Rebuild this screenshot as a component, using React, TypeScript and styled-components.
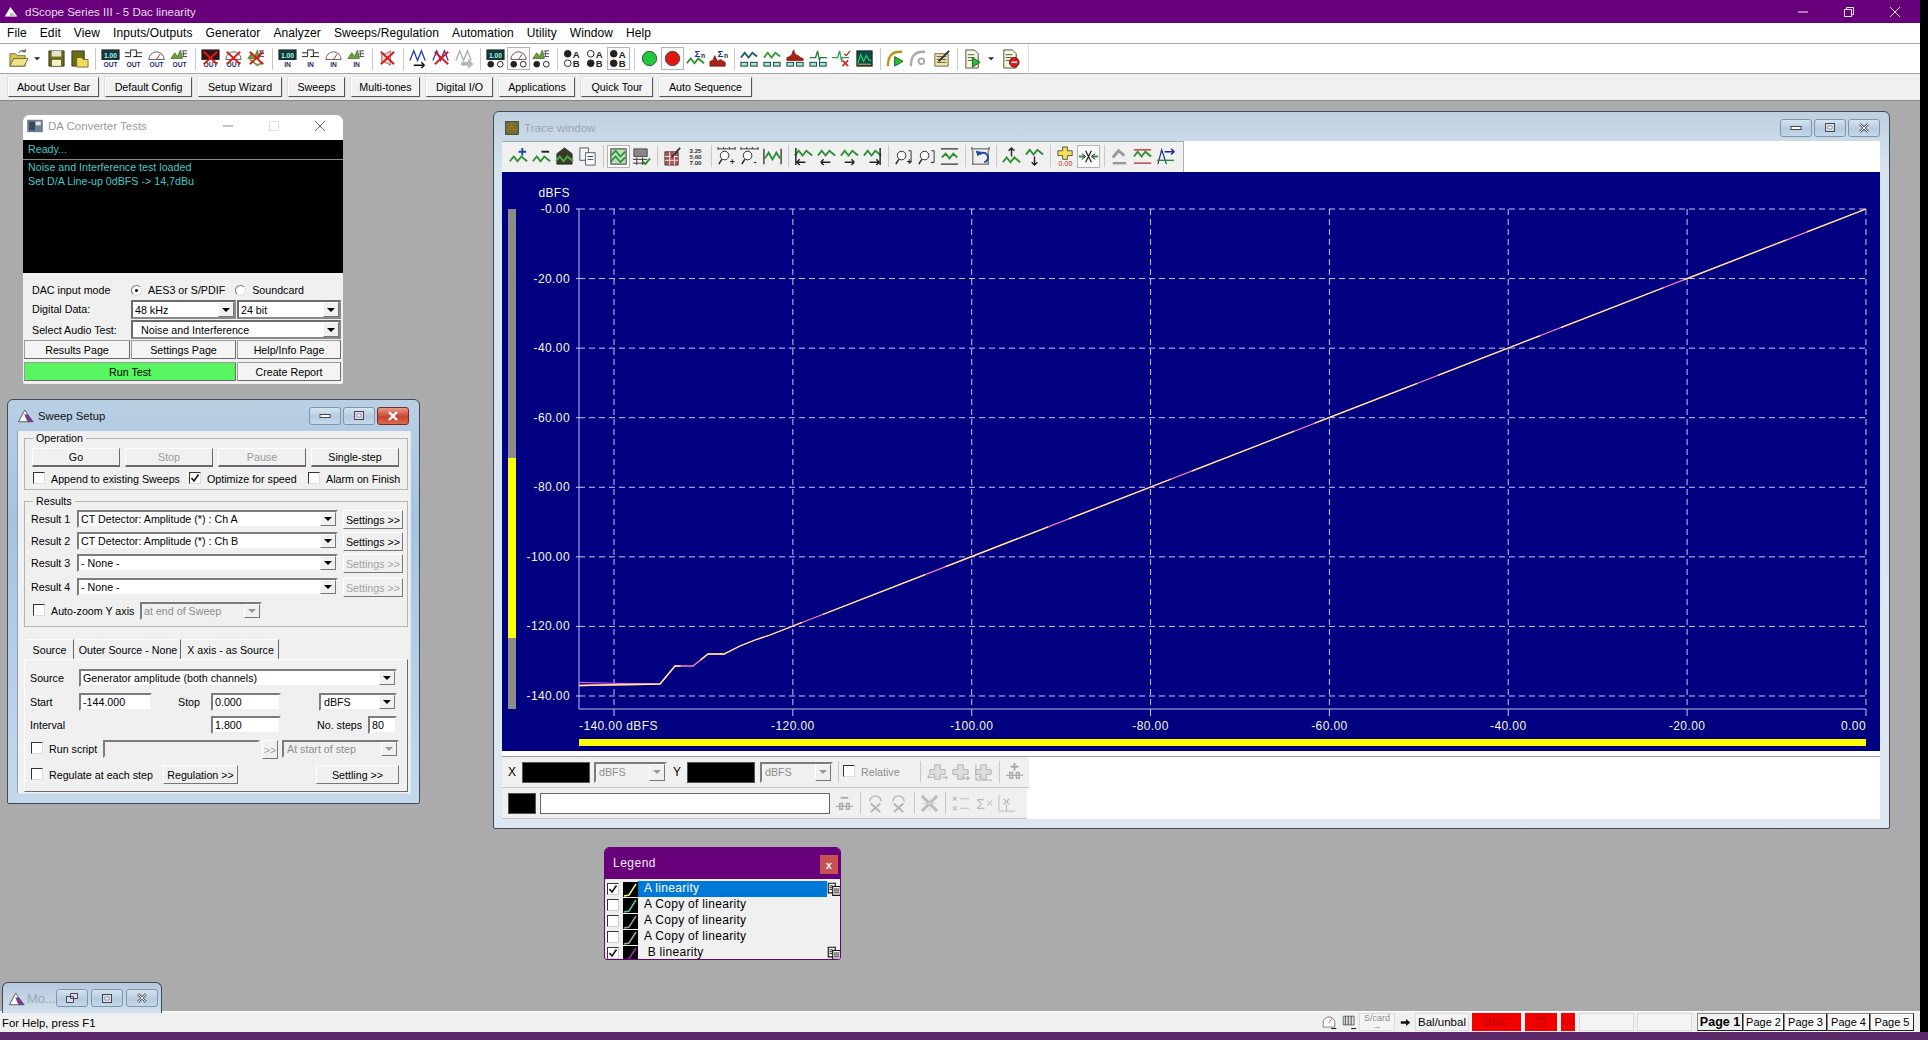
import React from "react";
import styled, { createGlobalStyle, css } from "styled-components";

const GlobalStyle = createGlobalStyle`
  html, body {
    margin: 0;
    padding: 0;
    background: #000;
    overflow: hidden;
  }
  * {
    box-sizing: border-box;
  }
  body {
    font-family: "Liberation Sans", Arial, sans-serif;
    font-size: 10.7px;
    color: #000;
  }
`;

const Screen = styled.div`
  width: 1928px;
  height: 1040px;
  display: flex;
  flex-direction: column;
  background: #000;
`;

const Frame = styled.div`
  width: 1920px;
  height: 1032px;
  display: flex;
  flex-direction: column;
  background: #f0f0f0;
`;

const BottomStrip = styled.div`
  height: 8px;
  background: #5c2a68;
`;

const TitleBar = styled.div`
  height: 23px;
  background: #68007c;
  color: #e8dcec;
  display: flex;
  align-items: center;
  padding-left: 4px;
  font-size: 11.5px;
  flex: none;
`;

const TitleText = styled.span`
  margin-left: 7px;
  flex: 1;
`;

const SysBtn = styled.div`
  width: 46px;
  height: 23px;
  display: flex;
  align-items: center;
  justify-content: center;
  &:last-child {
    margin-right: 2px;
  }
`;

const MenuBar = styled.div`
  height: 21px;
  background: #fff;
  border-bottom: 1px solid #a6a6a6;
  display: flex;
  align-items: center;
  padding-left: 7px;
  gap: 13px;
  font-size: 12px;
  letter-spacing: 0.1px;
  flex: none;
`;

const MainToolbar = styled.div`
  height: 30px;
  background: #fff;
  border-bottom: 1px solid #a6a6a6;
  display: flex;
  align-items: center;
  padding-left: 7px;
  flex: none;
`;

const ToolGroupEnd = styled.div`
  width: 1px;
  height: 29px;
  background: #ddd;
  margin-left: 6px;
`;

const ToolBtn = styled.div<{ $w: number; $pressed?: boolean; $off?: boolean }>`
  width: ${(p) => p.$w}px;
  height: 23px;
  flex: none;
  display: flex;
  align-items: center;
  justify-content: center;
  ${(p) =>
    p.$pressed &&
    css`
      background: #fafafa;
      border: 1px solid #b4b4b4;
    `}
  ${(p) =>
    p.$off &&
    css`
      filter: grayscale(1) opacity(0.5);
    `}
`;

const ToolSep = styled.div<{ $w: number }>`
  width: ${(p) => p.$w}px;
  height: 22px;
  flex: none;
  display: flex;
  justify-content: center;
  &::before {
    content: "";
    width: 1px;
    background: #c8c8c8;
  }
`;

const UserBar = styled.div`
  height: 26px;
  background: #f0f0f0;
  display: flex;
  align-items: flex-start;
  padding: 3px 0 0 8px;
  gap: 6px;
  flex: none;
`;

const UserBtn = styled.div<{ $w: number }>`
  width: ${(p) => p.$w}px;
  height: 20px;
  background: #f2f2f2;
  border: 1px solid;
  border-color: #fff #555 #555 #fff;
  box-shadow: 0 0 0 0.5px #cfcfcf;
  display: flex;
  align-items: center;
  justify-content: center;
`;

const Desktop = styled.div`
  flex: 1;
  position: relative;
  background: #ababab;
  border-top: 1px solid #888;
`;

const DaWindow = styled.div`
  position: absolute;
  left: 23px;
  top: 14px;
  width: 320px;
  height: 269px;
  border-radius: 7px 7px 2px 2px;
  overflow: hidden;
  background: #f0f0f0;
  display: flex;
  flex-direction: column;
`;

const DaTitle = styled.div`
  height: 25px;
  background: #fff;
  display: flex;
  align-items: center;
  padding: 0 0 3px 4px;
  color: #9a9a9a;
  font-size: 11.5px;
  flex: none;
`;

const DaTitleText = styled.span`
  margin-left: 5px;
  flex: 1;
`;

const DaCap = styled.div`
  width: 46px;
  display: flex;
  justify-content: center;
`;

const Console = styled.div`
  height: 133px;
  background: #000;
  color: #45c8c8;
  flex: none;
`;

const ConsoleHead = styled.div`
  height: 20px;
  padding: 3px 0 0 5px;
  border-bottom: 1px solid #8a8a8a;
`;

const ConsoleBody = styled.div`
  padding-left: 5px;
  line-height: 14px;
`;

const DaForm = styled.div`
  padding: 8px 2px 0 1px;
  display: grid;
  grid-template-columns: 106px 105px 104px;
  column-gap: 1px;
  grid-template-rows: 18px 20px 21px 22px 18px;
`;

const DaLabel = styled.div`
  padding-left: 8px;
  display: flex;
  align-items: center;
`;

const RadioRow = styled.div`
  grid-column: 2 / 4;
  display: flex;
  align-items: center;
`;

const Radio = styled.span<{ $on?: boolean; $ml?: number }>`
  width: 11px;
  height: 11px;
  border-radius: 50%;
  border: 1px solid #777;
  border-right-color: #ddd;
  border-bottom-color: #ddd;
  background: #fff;
  margin-left: ${(p) => p.$ml ?? 0}px;
  margin-right: 6px;
  display: flex;
  align-items: center;
  justify-content: center;
  &::after {
    content: "";
    width: 3px;
    height: 3px;
    border-radius: 50%;
    background: ${(p) => (p.$on ? "#000" : "transparent")};
  }
`;

const Sunken = styled.div<{ $w?: number; $off?: boolean; $pl?: number; $ml?: number }>`
  ${(p) => p.$w !== undefined && `width: ${p.$w}px;`}
  height: 18px;
  flex: none;
  margin-left: ${(p) => p.$ml ?? 0}px;
  background: ${(p) => (p.$off ? "#f0f0f0" : "#fff")};
  color: ${(p) => (p.$off ? "#8e8e8e" : "#000")};
  border: 2px solid;
  border-color: #7c7c7c #efefef #efefef #7c7c7c;
  display: flex;
  align-items: center;
  padding-left: ${(p) => p.$pl ?? 2}px;
  position: relative;
  white-space: nowrap;
  overflow: hidden;
`;

const ComboArrow = styled.div<{ $off?: boolean }>`
  position: absolute;
  right: 0;
  top: 0;
  bottom: 0;
  width: 16px;
  background: #f0f0f0;
  border: 1px solid;
  border-color: #fff #777 #777 #fff;
  display: flex;
  align-items: center;
  justify-content: center;
  &::after {
    content: "";
    border-left: 4px solid transparent;
    border-right: 4px solid transparent;
    border-top: 4px solid ${(p) => (p.$off ? "#999" : "#000")};
  }
`;

const DaCombo = styled(Sunken)`
  height: 19px;
  border-color: #6a6a6a #8a8a8a #8a8a8a #6a6a6a;
  align-self: start;
  margin-top: 1px;
`;

const DaComboWide = styled(DaCombo)`
  grid-column: 2 / 4;
  padding-left: 8px;
`;

const DaBtn = styled.div<{ $green?: boolean }>`
  height: 19px;
  align-self: start;
  background: ${(p) => (p.$green ? "#57f55f" : "#f4f4f4")};
  border: 1px solid #6c6c6c;
  border-top-color: #9a9a9a;
  border-left-color: #9a9a9a;
  display: flex;
  align-items: center;
  justify-content: center;
`;

const RunBtn = styled(DaBtn)`
  grid-column: 1 / 3;
`;

const AeroWindow = styled.div`
  position: absolute;
  background: linear-gradient(#b9cfe4, #a5c3e1 30%, #c4d9ec);
  border: 1px solid #3f4a55;
  border-radius: 6px 6px 2px 2px;
`;

const SweepWindow = styled(AeroWindow)`
  left: 7px;
  top: 298px;
  width: 413px;
  height: 405px;
  display: flex;
  flex-direction: column;
`;

const AeroTitle = styled.div`
  height: 31px;
  display: flex;
  align-items: center;
  padding: 0 10px 0 9px;
  font-size: 11.3px;
  flex: none;
`;

const AeroTitleText = styled.span<{ $dim?: boolean }>`
  margin-left: 4px;
  flex: 1;
  color: ${(p) => (p.$dim ? "#98a6b4" : "#111")};
`;

const CapRow = styled.div<{ $gap?: number }>`
  display: flex;
  gap: ${(p) => p.$gap ?? 2}px;
`;

const CapBtn = styled.div<{ $red?: boolean }>`
  width: 32px;
  height: 18px;
  border: 1px solid ${(p) => (p.$red ? "#7a2a20" : "#7f95ab")};
  border-radius: 3px;
  background: ${(p) =>
    p.$red
      ? "linear-gradient(#e89a8a, #c8442e 55%, #d86a50)"
      : "linear-gradient(#d7e4f0, #b5cbe0 55%, #c6d9ea)"};
  display: flex;
  align-items: center;
  justify-content: center;
`;

const SweepClient = styled.div`
  flex: 1;
  margin: 0 8px 9px 9px;
  background: #f0f0f0;
  padding: 1px 5px 0 6px;
  border: 1px solid #8ba0b5;
  border-top: 0;
  border-right-color: #dfe8f1;
  border-bottom-color: #dfe8f1;
`;

const Group = styled.fieldset`
  margin: 0 0 5px 0;
  border: 1px solid #b4b4b4;
  padding: 3px 7px 0 7px;
  min-width: 0;
  width: 384px;
`;

const ResultsGroup = styled(Group)`
  padding-top: 2px;
`;

const GroupTitle = styled.legend`
  margin-left: 1px;
  padding: 0 3px;
  line-height: 13px;
`;

const OpButtons = styled.div`
  display: grid;
  grid-template-columns: repeat(4, 88px);
  column-gap: 5px;
`;

const OpBtn = styled.div<{ $off?: boolean }>`
  height: 19px;
  background: #f0f0f0;
  color: ${(p) => (p.$off ? "#9a9a9a" : "#000")};
  border: 1px solid;
  border-color: #fff #6a6a6a #6a6a6a #fff;
  border-bottom-width: 2px;
  display: flex;
  align-items: center;
  justify-content: center;
`;

const CheckRow = styled.div`
  height: 20px;
  display: flex;
  align-items: center;
  margin-top: 2px;
`;

const PanelCheck = styled.div<{ $h: number }>`
  height: ${(p) => p.$h}px;
  display: flex;
  align-items: center;
`;

const Box = styled.span<{ $flush?: boolean }>`
  width: 12px;
  height: 12px;
  flex: none;
  display: inline-flex;
  align-items: center;
  justify-content: center;
  background: #fff;
  border: 1px solid;
  border-color: #333 #ddd #ddd #333;
  margin: ${(p) => (p.$flush ? "0 6px 0 0" : "0 6px 0 1px")};
  position: relative;
  top: -1px;
`;

const CheckLabel = styled.span<{ $w?: number; $off?: boolean }>`
  ${(p) => p.$w !== undefined && `width: ${p.$w}px;`}
  color: ${(p) => (p.$off ? "#8e8e8e" : "#000")};
  white-space: nowrap;
  flex: none;
`;

const ResultGrid = styled.div`
  display: grid;
  grid-template-columns: 48px 261px 60px;
  grid-template-rows: 22px 22px 24px 24px 24px;
  margin-left: -3px;
`;

const ResultLabel = styled.div`
  height: 18px;
  display: flex;
  align-items: center;
  padding-left: 2px;
  white-space: nowrap;
`;

const SettingsBtn = styled.div<{ $off?: boolean }>`
  height: 19px;
  margin-left: 5px;
  width: 60px;
  color: ${(p) => (p.$off ? "#a4a4a4" : "#000")};
  border: 1px solid;
  border-color: #fff #777 #777 #fff;
  display: flex;
  align-items: center;
  justify-content: center;
  white-space: nowrap;
`;

const AutoRow = styled.div`
  grid-column: 1 / 4;
  display: flex;
  align-items: center;
  height: 18px;
  padding-left: 3px;
`;

const TabRow = styled.div`
  display: flex;
  margin: 12px 0 0 2px;
  height: 20px;
`;

const Tab = styled.div<{ $w: number }>`
  width: ${(p) => p.$w}px;
  display: flex;
  align-items: center;
  justify-content: center;
  margin-right: 2px;
  border-right: 1px solid #666;
  border-top: 1px solid #fff;
  white-space: nowrap;
`;

const TabPanel = styled.div`
  width: 384px;
  height: 133px;
  border: 1px solid;
  border-color: #fff #6a6a6a #6a6a6a #fff;
  padding: 9px 8px 0 5px;
  display: flex;
  flex-direction: column;
`;

const PanelRow = styled.div<{ $h: number }>`
  display: flex;
  align-items: flex-start;
  height: ${(p) => p.$h}px;
  flex: none;
`;

const PanelLabel = styled.div<{ $w?: number; $pl?: number }>`
  width: ${(p) => p.$w ?? 49}px;
  height: 18px;
  flex: none;
  padding-left: ${(p) => p.$pl ?? 0}px;
  display: flex;
  align-items: center;
`;

const SmallBtn = styled.div<{ $w: number; $off?: boolean; $ml?: number }>`
  width: ${(p) => p.$w}px;
  height: 19px;
  flex: none;
  margin-left: ${(p) => p.$ml ?? 0}px;
  color: ${(p) => (p.$off ? "#a4a4a4" : "#000")};
  border: 1px solid;
  border-color: #fff #777 #777 #fff;
  display: flex;
  align-items: center;
  justify-content: center;
  white-space: nowrap;
`;

const TraceWindow = styled(AeroWindow)`
  left: 493px;
  top: 10px;
  width: 1397px;
  height: 718px;
  background: linear-gradient(#bfd0df, #d6e4f0 8%, #dde8f2);
  display: flex;
  flex-direction: column;
`;

const TraceTitle = styled(AeroTitle)`
  height: 29px;
  padding: 2px 9px 0 10px;
  font-size: 11.7px;
`;

const TraceClient = styled.div`
  flex: 1;
  margin: 0 9px 9px 8px;
  background: #fff;
  display: flex;
  flex-direction: column;
`;

const TraceToolbar = styled.div`
  height: 31px;
  width: 682px;
  background: #f0f0f0;
  border-right: 1px solid #b0b0b0;
  border-top: 1px solid #9aa;
  display: flex;
  align-items: center;
  padding: 0 0 2px 5px;
  flex: none;
`;

const Plot = styled.svg`
  display: block;
  width: 1378px;
  height: 579px;
  background: #000080;
  flex: none;
`;

const ReadoutRow = styled.div<{ $w: number }>`
  width: ${(p) => p.$w}px;
  height: 31px;
  background: #f0f0f0;
  border-bottom: 1px solid #c4c4c4;
  display: flex;
  align-items: center;
  flex: none;
`;

const Spacer = styled.div`
  height: 6px;
  background: #fff;
  border-bottom: 1px solid #9a9a9a;
  flex: none;
`;

const BlackBox = styled.div<{ $w: number; $ml: number }>`
  width: ${(p) => p.$w}px;
  height: 21px;
  margin-left: ${(p) => p.$ml}px;
  background: #000;
  border: 1px solid #555;
  flex: none;
`;

const AxisName = styled.span<{ $w: number }>`
  width: ${(p) => p.$w}px;
  font-size: 12px;
  text-align: center;
  flex: none;
`;

const UnitCombo = styled(Sunken)`
  height: 21px;
`;

const WhiteField = styled.div`
  width: 290px;
  height: 21px;
  margin: 0 3px 0 4px;
  background: #fff;
  border: 1px solid #666;
  flex: none;
`;

const LegendWindow = styled.div`
  position: absolute;
  left: 604px;
  top: 746px;
  width: 237px;
  height: 113px;
  background: #f0f0f0;
  border: 1px solid #68007c;
  border-radius: 5px 5px 3px 3px;
  overflow: hidden;
`;

const LegendHead = styled.div`
  height: 31px;
  background: #68007c;
  color: #eee;
  display: flex;
  align-items: center;
  padding: 0 2px 2px 8px;
  font-size: 12px;
  letter-spacing: 0.5px;
  justify-content: space-between;
`;

const LegendClose = styled.div`
  width: 18px;
  height: 19px;
  background: #c75050;
  color: #fff;
  font-size: 11px;
  font-weight: bold;
  display: flex;
  align-items: center;
  justify-content: center;
  margin-top: 4px;
`;

const LegendList = styled.div`
  padding-top: 2px;
`;

const LegendRow = styled.div`
  height: 16px;
  display: flex;
  align-items: center;
  padding-left: 2px;
`;

const LegendBox = styled.span`
  width: 12px;
  height: 12px;
  background: #fff;
  border: 1px solid;
  border-color: #333 #ccc #ccc #333;
  display: flex;
  align-items: center;
  justify-content: center;
  margin-right: 4px;
  flex: none;
`;

const Swatch = styled.svg`
  width: 15px;
  height: 15px;
  display: block;
  background: #000;
  flex: none;
`;

const LegendName = styled.div<{ $active?: boolean }>`
  width: 189px;
  height: 16px;
  line-height: 15px;
  padding-left: 6px;
  font-size: 12px;
  letter-spacing: 0.3px;
  background: ${(p) => (p.$active ? "#0078d7" : "transparent")};
  color: ${(p) => (p.$active ? "#fff" : "#000")};
  flex: none;
  white-space: pre;
`;

const MiniWindow = styled(AeroWindow)`
  left: 2px;
  top: 881px;
  width: 160px;
  height: 31px;
  border-bottom: 0;
  border-radius: 6px 6px 0 0;
  background: linear-gradient(#b6c9dc, #d0e0ee);
  display: flex;
  align-items: center;
  padding-left: 5px;
  color: #9aa8b6;
  font-size: 13px;
`;

const MiniText = styled.span`
  width: 29px;
  margin-left: 2px;
  white-space: nowrap;
`;

const StatusBar = styled.div`
  height: 21px;
  background: #f0f0f0;
  border-top: 1px solid #fff;
  display: flex;
  align-items: center;
  justify-content: space-between;
  padding: 0 6px 0 2px;
  flex: none;
`;

const HelpText = styled.span`
  font-size: 11.3px;
  padding-top: 2px;
`;

const StatusRight = styled.div`
  display: flex;
  align-items: center;
  height: 18px;
  font-size: 11.5px;
`;

const StatusIcon = styled.div<{ $w: number }>`
  width: ${(p) => p.$w}px;
  height: 18px;
  display: flex;
  align-items: center;
  justify-content: center;
  flex: none;
`;

const StatusCell = styled.div<{ $w: number; $red?: boolean; $ml?: number }>`
  width: ${(p) => p.$w}px;
  height: 18px;
  margin-left: ${(p) => p.$ml ?? 0}px;
  background: ${(p) => (p.$red ? "#f50000" : "#f4f4f4")};
  color: ${(p) => (p.$red ? "#b40000" : "#000")};
  border: 1px solid ${(p) => (p.$red ? "#f50000" : "#dcdcdc")};
  display: flex;
  align-items: center;
  justify-content: center;
  flex: none;
  white-space: nowrap;
`;

const TinyStack = styled.div<{ $size?: number }>`
  font-size: ${(p) => p.$size ?? 7}px;
  line-height: 7px;
  text-align: center;
`;

const ScardCell = styled(StatusCell)`
  color: #8e8e8e;
  font-size: 9px;
  line-height: 8px;
  text-align: center;
`;

const PageTab = styled.div<{ $w: number; $active?: boolean; $ml?: number }>`
  width: ${(p) => p.$w}px;
  height: 18px;
  flex: none;
  margin-left: ${(p) => p.$ml ?? 0}px;
  background: ${(p) => (p.$active ? "#f0f0f0" : "#f8f8f8")};
  border: 1px solid;
  border-color: #888 #222 #222 #888;
  font-weight: ${(p) => (p.$active ? "bold" : "normal")};
  font-size: ${(p) => (p.$active ? "12.5px" : "11px")};
  display: flex;
  align-items: center;
  justify-content: center;
  white-space: nowrap;
`;

const IconSvg = styled.svg`
  display: block;
  flex: none;
`;

const Svg: React.FC<{ s?: number; children: React.ReactNode }> = ({ s = 22, children }) => (
  <IconSvg width={s} height={s} viewBox="0 0 22 22" fill="none">
    {children}
  </IconSvg>
);

const tiny = (t: string, x: number, y: number, size = 7, fill = "#1b2a6b", weight = "bold") => (
  <text x={x} y={y} fontSize={size} fontWeight={weight} textAnchor="middle" fill={fill} fontFamily="Liberation Sans">
    {t}
  </text>
);

const line = (d: string, c = "#222", w = 1) => <path d={d} stroke={c} strokeWidth={w} fill="none" />;
const area = (d: string, f: string, c = "#333") => <path d={d} fill={f} stroke={c} strokeWidth={0.8} />;
const wave = (c = "#2f8f35", dy = 0) => line(`M2 ${13 + dy}l4-5 4 5 4-5 6 5`, c, 2);
const redX = <>{line("M4 4l14 13M18 4L4 17", "#d41e1e", 2)}</>;

const meter = <><rect x="2" y="2" width="18" height="10" fill="#123a3a" stroke="#222" />{tiny("1.00", 11, 10, 7, "#a9f2f2")}</>;
const plug = line("M2 5h6v-3h6v3h6M2 9h6v-4M14 5v4h-3M11 9h9", "#222");
const gauge = <>{area("M3 12a8 8 0 0 1 16 0z", "#fff")}{line("M11 12l4-6", "#c22", 1)}</>;
const spec = <>{area("M2 11l4-6 3 4 3-7 2 9H2z", "#6f9d3c", "#4a6a20")}{line("M14 3h5M14 6h5M14 9h5M15 3v6", "#444")}</>;
const abRow = (a: boolean, b: boolean) => (
  <>
    <circle cx="6" cy="6" r="3.5" stroke="#222" fill={a ? "#222" : "#fff"} />
    {tiny("A", 15, 10, 10, "#222")}
    <circle cx="6" cy="16" r="3.5" stroke="#222" fill={b ? "#222" : "#fff"} />
    {tiny("B", 15, 20, 10, "#222")}
  </>
);
const dualFeet = (
  <>
    <circle cx="6" cy="17" r="3" stroke="#222" fill="#222" />
    <circle cx="16" cy="17" r="3" stroke="#222" fill="#fff" />
  </>
);
const boxes = <><rect x="2" y="15" width="7" height="4" fill="#9ec" stroke="#234" /><rect x="12" y="15" width="7" height="4" fill="#9ec" stroke="#234" /></>;
const doc = <>{area("M4 2h9l4 4v15H4z", "#f6f6d8", "#222")}{line("M6 7h7M6 10h7M6 13h5", "#555")}</>;
const glass = (s: string) => <><circle cx="9" cy="10" r="4.5" stroke="#223" fill="#fff" />{line("M6 14l-3 5", "#223", 1.5)}{tiny(s, 17, 20, 9, "#222")}</>;
const bracket = line("M16 5h3v12h-3", "#333");
const waveArrow = (d: string) => <>{wave("#2f8f35", -3)}{line(d, "#222", 1.5)}</>;
const cross = <>{area("M8 3h6v5h5v5h-5v5H8v-5H3V8h5z", "#ccc", "#555")}</>;

const glyphs: Record<string, React.ReactNode> = {
  open: <>{area("M2 6h6l2 2h8v11H2z", "#d9c457", "#5a5520")}{area("M2 19l4-8h15l-4 8z", "#efe28c", "#5a5520")}{line("M11 5q4-4 7-1", "#333")}{line("M18 1v3h-3", "#333")}</>,
  drop: <path d="M6 9h9l-4.5 4.5z" fill="#222" />,
  save: <>{area("M3 3h16v16H3z", "#6c6c16", "#222")}<rect x="6" y="3" width="10" height="6" fill="#e4e4c8" /><rect x="6" y="12" width="10" height="7" fill="#f7f2c4" stroke="#333" strokeWidth="0.5" /></>,
  saveas: <>{area("M3 3h13v16H3z", "#6c6c16", "#222")}{area("M8 10h5l2 2h5v8H8z", "#eedb58", "#5a5520")}</>,
  outMeter: <>{meter}{tiny("OUT", 11, 20)}</>,
  outPlug: <>{plug}{tiny("OUT", 11, 20)}</>,
  outGauge: <>{gauge}{tiny("OUT", 11, 20)}</>,
  outSpec: <>{spec}{tiny("OUT", 11, 20)}</>,
  outMeterX: <><rect x="2" y="2" width="18" height="10" fill="#3a1212" stroke="#222" />{tiny("OUT", 11, 20)}{redX}</>,
  outGaugeX: <>{gauge}{tiny("OUT", 11, 20)}{redX}</>,
  specX: <>{spec}{line("M4 12l8 6 6-3", "#6f9d3c", 2)}{redX}</>,
  inMeter: <>{meter}{tiny("IN", 11, 20)}</>,
  inPlug: <>{plug}{tiny("IN", 11, 20)}</>,
  inGauge: <>{gauge}{tiny("IN", 11, 20)}</>,
  inSpec: <>{spec}{tiny("IN", 11, 20)}</>,
  mute: <>{area("M5 6h4l5-3v15l-5-3H5z", "#e8d8d8", "#934")}{redX}</>,
  peaks: <>{line("M2 13l4-10 4 10 4-10 4 10", "#1f3fa4", 1.4)}{line("M6 18h11M14 15l3 3-3 3", "#111", 1.5)}</>,
  peaksX: <>{line("M2 13l4-10 4 10 4-10 4 10", "#5a2aa4", 1.4)}{redX}</>,
  peaksOff: <>{line("M2 13l4-10 4 10 4-10 4 10", "#aaa", 1.4)}{area("M8 15h7v-3l5 5-5 4v-3H8z", "#bbb", "#aaa")}</>,
  dualMeter: <>{meter}{dualFeet}</>,
  dualGauge: <>{gauge}{dualFeet}</>,
  dualSpec: <>{spec}{dualFeet}</>,
  abA: abRow(true, false),
  abB: abRow(false, true),
  abAB: abRow(true, true),
  green: <circle cx="11" cy="11" r="7.5" fill="#20c83a" stroke="#444" />,
  red: <circle cx="11" cy="11" r="7.5" fill="#e31616" stroke="#444" />,
  sigmaWave: <>{wave("#2f8f35", 3)}{tiny("Σ", 13, 9, 10, "#1b2a9b")}{tiny("n", 19, 10, 7, "#222")}</>,
  sigmaBars: <>{area("M2 19v-5l3-1 2-5 3 6 3-2 5 3v4z", "#a82218", "#7a1810")}{tiny("Σ", 13, 9, 10, "#1b2a9b")}{tiny("n", 19, 10, 7, "#222")}</>,
  waveBoxes: <>{line("M2 10l4-5 4 5 4-5 5 4", "#1f5f60", 2)}{boxes}</>,
  greenBoxes: <>{line("M2 10l4-5 4 5 4-5 5 4", "#3a9a35", 2)}{boxes}</>,
  barsBoxes: <>{area("M2 13V10l3-1 2-2 2-5 2 5 3 1 2 2 3 1v2z", "#a82218", "#7a1810")}{boxes}</>,
  spikeBoxes: <>{line("M2 10h6l2-7 2 10 1-3h7", "#1f7f3a", 1.4)}{boxes}</>,
  spikeX: <>{line("M1 10h6l2-7 2 10 1-3h7", "#2f9f5a", 1.4)}{line("M12 13l6 6M18 13l-6 6", "#d41e1e", 1.6)}{line("M14 6l2 2 4-5", "#a82218", 1.2)}</>,
  graphBox: <><rect x="3" y="3" width="16" height="16" fill="#0b4a4a" stroke="#222" />{line("M4 16l3-9 3 7 3-6 3 5h2", "#2fd05a", 1.2)}{line("M4 17h14", "#d2a13a", 1.2)}</>,
  scriptRun: <>{line("M3 19C3 8 8 3 18 4", "#b19a18", 2.5)}<path d="M10 9l9 5-9 5z" fill="#2eb83a" stroke="#186a20" /></>,
  scriptOff: <>{line("M3 19C3 8 8 3 18 4", "#aaa", 2.5)}<circle cx="14" cy="14" r="3" stroke="#aaa" strokeWidth="2" /></>,
  notepad: <>{area("M4 6h14v13H4z", "#f4e7a0", "#444")}{line("M6 9h10M6 12h10M6 15h10", "#555")}{line("M8 14L19 3", "#333", 2)}</>,
  docPlay: <>{doc}<path d="M11 10l8 5-8 5z" fill="#2eb83a" stroke="#186a20" /></>,
  docStop: <>{doc}<circle cx="15" cy="15" r="5" fill="#d81e1e" stroke="#700" />{line("M12 15h6", "#fff", 1.5)}</>,
  wavePlus: <>{wave("#2f8f35", 3)}{line("M15 2v8M11 6h8", "#1b4a9b", 2)}</>,
  waveMinus: <>{wave("#2f8f35", 3)}{line("M11 6h8", "#222", 2)}</>,
  saveWave: <>{area("M3 8l8-6 8 6v11H3z", "#3a3a2a", "#222")}{wave("#49b04d", 3)}</>,
  copy: <>{area("M3 2h9v13H3z", "#f4f4f4", "#234")}{area("M9 7h10v13H9z", "#fff", "#234")}{line("M11 11h6M11 14h6", "#345")}</>,
  legendDoc: (
    <>
      <path d="M2 2h11v15H2z" fill="#f4f4f4" stroke="#111" strokeWidth="1.8" />
      <path d="M9 7h12v14H9z" fill="#fff" stroke="#111" strokeWidth="1.8" />
      {line("M11 11h8M11 14h8M11 17h8", "#111", 1.4)}
      {line("M4 6h5M4 9h4M4 12h4", "#111", 1.4)}
    </>
  ),
  waveChart: <><rect x="3" y="3" width="16" height="16" fill="#b8dfb8" stroke="#333" />{line("M3 10l5-5 5 6 5-5M3 16l5-5 5 6 5-5", "#2f8f35", 1.8)}</>,
  tableCheck: <>{area("M3 3h14v8H3z", "#888", "#333")}{line("M2 14h15M2 18h15M6 12v8M12 12v8", "#333")}{line("M12 16l3 3 5-6", "#2f8f35", 2)}</>,
  noteRed: <>{area("M3 6h14v14H3z", "#a85a5a", "#422")}{line("M3 11h14M3 15h14M8 6v14M13 6v14", "#f4e0e0")}{line("M10 12L19 2", "#333", 2)}</>,
  numbers: <>{tiny("3.25", 11, 7, 6.5, "#333")}{tiny("5.60", 11, 13.5, 6.5, "#333")}{tiny("7.00", 11, 20, 6.5, "#333")}</>,
  zoomPlus: <>{line("M2 3h18M2 1v3M20 1v3M8 1v2M14 1v2", "#333")}{glass("+")}</>,
  zoomMinus: <>{line("M2 3h18M2 1v3M20 1v3M8 1v2M14 1v2", "#333")}{glass("-")}</>,
  waveSpan: <>{line("M2 3v16M20 3v16", "#333", 1.4)}{line("M3 13l4-6 4 7 4-7 4 6", "#2f8f35", 2)}</>,
  waveLeft: waveArrow("M3 2v18M4 17h9M4 17l3-3M4 17l3 3"),
  waveBack: waveArrow("M5 17h10M5 17l3-3M5 17l3 3"),
  waveFwd: waveArrow("M6 17h10M16 17l-3-3M16 17l-3 3"),
  waveRight: waveArrow("M19 2v18M8 17h10M18 17l-3-3M18 17l-3 3"),
  zoomYPlus: <>{glass("+")}{bracket}</>,
  zoomYMinus: <>{glass("-")}{bracket}</>,
  waveFit: <>{line("M2 3h18M2 19h18", "#333", 1.3)}{line("M3 12l4-4 4 5 4-5 4 4", "#2f8f35", 2)}</>,
  undoGrid: <>{line("M2 3h18M2 1v4M20 1v4M2 19h18M3 5v14M19 5v14", "#333", 0.9)}{line("M15 17a5 5 0 1 0-5-8", "#1b4a9b", 2)}<path d="M6 5l6 1-4 5z" fill="#1b4a9b" /></>,
  waveUp: <>{wave("#2f8f35", 4)}{line("M11 2v9M8 5l3-3 3 3", "#222", 1.5)}</>,
  waveDown: <>{wave("#2f8f35", -4)}{line("M11 11v9M8 17l3 3 3-3", "#222", 1.5)}</>,
  cursorZero: <>{area("M8 1h5v4h5v5h-5v4H8v-4H3V5h5z", "#f2e05a", "#333")}{tiny("0.00", 11, 21, 7.5, "#c22", "normal")}</>,
  cursorIn: <>{line("M1 11h6M15 11h6", "#2f8f35", 2)}{line("M8 5l6 12M14 5L8 17", "#222", 1.3)}{line("M4 8l4 3-4 3M18 8l-4 3 4 3", "#222", 1)}</>,
  waveGrey: <>{line("M4 12l6-7 6 5", "#999", 3)}{line("M4 18h14", "#999", 2.5)}</>,
  waveRedLines: <>{line("M2 4h18M2 18h18", "#b22", 1.4)}{wave("#2f8f35", -2)}</>,
  traceArrows: <>{line("M3 19L7 4l5 15", "#1b2a8b", 1.2)}{line("M2 15h18", "#2f8f35", 1.5)}{line("M10 6h10M17 3l3 3-3 3", "#1b2a8b", 1.5)}</>,
  xWave: <>{cross}{line("M2 14l-1 2h6M16 16h5l-1 2", "#666", 1.2)}</>,
  xPlus: <>{cross}{line("M13 17h7M18 15l2 2-2 2", "#666", 1.2)}</>,
  xGraph: <>{line("M3 2v17h17M3 19l6-6", "#777")}{cross}</>,
  xStack: <>{line("M11 1v8M7 5h8", "#666", 2)}{line("M2 14h18M6 11h3v6H6zM13 11h3v6h-3z", "#666", 1.5)}</>,
  xMinus: <>{line("M7 5h8", "#666", 2)}{line("M2 14h18M6 11h3v6H6zM13 11h3v6h-3z", "#666", 1.5)}</>,
  xRotL: <>{line("M5 9a6 6 0 0 1 12 0", "#777", 1.4)}{line("M6 11l10 9M16 11L6 20", "#777", 2)}</>,
  xBig: <>{line("M3 3l16 16M19 3L3 19", "#888", 3)}{line("M3 11h16M11 3v16", "#bbb", 1)}</>,
  xList: <>{line("M3 4l4 4M7 4L3 8M3 14l4 4M7 14l-4 4", "#888", 1.4)}{line("M11 6h9M11 16h9", "#888", 1.2)}</>,
  sigmaX: <>{tiny("Σ", 8, 17, 15, "#888", "normal")}{line("M15 8l5 5M20 8l-5 5", "#999", 1.3)}</>,
  xChart: <>{line("M3 2v17h17", "#888")}{line("M8 6l6 6M14 6l-6 6M11 12v7", "#888", 1.3)}</>,
  gaugeSmall: <>{area("M3 12a8 8 0 0 1 16 0v6H3z", "#fff")}{line("M11 12l4-6", "#c22")}{line("M14 20h7", "#222", 1.5)}</>,
  meterSmall: <>{area("M3 3h15v12H3z", "#ddd", "#222")}{line("M6 3v12M10 3v12M14 3v12", "#222")}{line("M14 20h7", "#222", 1.5)}</>,
  arrowRight: <path d="M3 9h9V5l7 6-7 6v-4H3z" fill="#111" />,
  traceDoc: <><rect x="2" y="2" width="18" height="18" fill="#6c7230" stroke="#333" />{line("M3 15l4-2 3-8 3 9 5-2", "#e35a2a", 1.3)}</>,
  daDoc: <><rect x="1" y="3" width="20" height="16" fill="#6c8294" stroke="#667" /><rect x="3" y="5" width="8" height="12" fill="#324a5c" /><rect x="12" y="5" width="7" height="5" fill="#dfe8ef" /></>,
  delta: <>{area("M2 19L10 4l10 15z", "#fff", "#111")}{area("M10 10l4 0 7 9h-7z", "#7a3a8a", "#7a3a8a")}</>,
  appLogo: <><path d="M1 18L10 3l11 15z" fill="#fff" /><path d="M9 12h4l6 6H9z" fill="#c9bcd0" /></>,
};

const Glyph: React.FC<{ name: string; s?: number }> = ({ name, s }) => <Svg s={s}>{glyphs[name]}</Svg>;

// toolbar strings: "|" separator, "!" pressed, "~" greyed out
const ToolStrip: React.FC<{ tools: string; w?: number; sep?: number }> = ({ tools, w = 23, sep = 8 }) => (
  <>
    {tools.split(" ").map((t, i) => {
      if (t === "|") return <ToolSep key={i} $w={sep} />;
      const pressed = t.startsWith("!");
      const off = t.startsWith("~");
      const name = t.replace(/^[!~]/, "");
      return (
        <ToolBtn key={i} $w={name === "drop" ? 15 : w} $pressed={pressed} $off={off}>
          <Glyph name={name} s={name === "drop" ? 15 : 21} />
        </ToolBtn>
      );
    })}
  </>
);

const mainTools =
  "open drop save saveas | outMeter outPlug outGauge outSpec | outMeterX outGaugeX specX | inMeter inPlug inGauge inSpec | mute | peaks peaksX peaksOff | dualMeter !dualGauge dualSpec | abA abB !abAB | green !red sigmaWave sigmaBars | waveBoxes greenBoxes barsBoxes spikeBoxes spikeX graphBox | scriptRun scriptOff notepad | docPlay drop docStop";
const traceTools =
  "wavePlus waveMinus saveWave copy | !waveChart tableCheck | noteRed numbers | zoomPlus zoomMinus waveSpan | waveLeft waveBack waveFwd waveRight | zoomYPlus zoomYMinus waveFit | undoGrid | waveUp waveDown | cursorZero !cursorIn | waveGrey waveRedLines traceArrows";

const menuItems = ["File", "Edit", "View", "Inputs/Outputs", "Generator", "Analyzer", "Sweeps/Regulation", "Automation", "Utility", "Window", "Help"];
const userButtons: [string, number][] = [
  ["About User Bar", 91],
  ["Default Config", 87],
  ["Setup Wizard", 84],
  ["Sweeps", 57],
  ["Multi-tones", 69],
  ["Digital I/O", 67],
  ["Applications", 76],
  ["Quick Tour", 72],
  ["Auto Sequence", 93],
];

const results = [
  { n: "Result 1", v: "CT Detector: Amplitude (*) : Ch A", off: false },
  { n: "Result 2", v: "CT Detector: Amplitude (*) : Ch B", off: false },
  { n: "Result 3", v: "- None -", off: true },
  { n: "Result 4", v: "- None -", off: true },
];

const legend = [
  { name: "A linearity", color: "#ffff66", on: true, active: true, doc: true },
  { name: "A Copy of linearity", color: "#5fc8a0", on: false },
  { name: "A Copy of linearity", color: "#999", on: false },
  { name: "A Copy of linearity", color: "#aaa", on: false },
  { name: " B linearity", color: "#b030b0", on: true, doc: true },
];

const PLOT = { left: 77, right: 1364, top: 37, bottom: 537, x0: 112, dx: 178.85, dy: 69.57 };
const curve =
  "77,513.5 158,512 173,494 191,494 206,482 222,482 238,474 253,468 268,463 291,454 1364,37";

const TracePlot: React.FC = () => {
  const { left, right, top, bottom, x0, dx, dy } = PLOT;
  const xs = Array.from({ length: 8 }, (_, i) => x0 + i * dx);
  const ys = Array.from({ length: 8 }, (_, i) => top + i * dy);
  const label = { fill: "#f6f6dc", fontSize: 12, fontFamily: "Liberation Sans", letterSpacing: 0.4 };
  return (
    <Plot viewBox="0 0 1378 579">
      <rect x="6" y={top} width="8" height={bottom - top} fill="#8c8c8c" />
      <rect x="6" y="286" width="8" height="180" fill="#ffff00" />
      {xs.map((x, i) => (
        <g key={x}>
          <line x1={x} x2={x} y1={top} y2={bottom} stroke="#c8c8f0" strokeDasharray="6 4" />
          <line x1={x} x2={x} y1={bottom} y2={bottom + 7} stroke="#c8c8f0" />
          {i > 0 && i < 7 && (
            <text x={x} y={558} textAnchor="middle" {...label}>
              {`-${(7 - i) * 20}.00`}
            </text>
          )}
        </g>
      ))}
      {ys.map((y, i) => (
        <g key={y}>
          <line x1={left} x2={right} y1={y} y2={y} stroke="#c8c8f0" strokeDasharray="6 4" />
          <line x1={left - 3} x2={left} y1={y} y2={y} stroke="#c8c8f0" />
          <text x={68} y={y + 4} textAnchor="end" {...label}>
            {`-${i * 20}.00`}
          </text>
        </g>
      ))}
      <line x1={left} x2={left} y1={top} y2={bottom} stroke="#c0c0ee" />
      <line x1={left} x2={right} y1={bottom} y2={bottom} stroke="#c0c0ee" />
      <text x={68} y={25} textAnchor="end" {...label}>
        dBFS
      </text>
      <text x={left} y={558} {...label}>
        -140.00 dBFS
      </text>
      <text x={right} y={558} textAnchor="end" {...label}>
        0.00
      </text>
      <rect x={left} y={567} width={right - left} height={7} fill="#ffff00" />
      <polyline points="77,510.5 120,511.5 158,512" fill="none" stroke="#ff60ff" strokeWidth="1" />
      <polyline points={curve} fill="none" stroke="#ff7cc0" strokeWidth="1.3" />
      <polyline points={curve} fill="none" stroke="#ffe98c" strokeWidth="1.3" strokeDasharray="110 22" />
    </Plot>
  );
};

const checkMark = (
  <svg width="10" height="10">
    <path d="M1.5 5l2.5 3 4.5-6.5" stroke="#111" strokeWidth="1.6" fill="none" />
  </svg>
);

const MinGlyph = () => (
  <svg width="12" height="6"><rect x="1" y="1.5" width="10" height="3" fill="#fff" stroke="#445" /></svg>
);
const MaxGlyph = () => (
  <svg width="10" height="9"><rect x="0.5" y="0.5" width="9" height="8" fill="#dde" stroke="#445" /><rect x="3" y="3" width="4" height="3" fill="#fff" stroke="#445" strokeWidth="0.5" /></svg>
);
const CloseGlyph = () => (
  <svg width="12" height="10"><path d="M2 1l8 8M10 1L2 9" stroke="#667" strokeWidth="2.6" /><path d="M2 1l8 8M10 1L2 9" stroke="#eee" strokeWidth="1" /></svg>
);

const App: React.FC = () => (
  <Screen>
    <GlobalStyle />
    <Frame>
      <TitleBar>
        <Glyph name="appLogo" s={14} />
        <TitleText>dScope Series III - 5 Dac linearity</TitleText>
        <SysBtn>
          <svg width="12" height="12"><path d="M1 6h10" stroke="#eee" /></svg>
        </SysBtn>
        <SysBtn>
          <svg width="12" height="12"><path d="M1.5 3.5h7v7h-7zM3.5 3V1.5h7v7H9" stroke="#eee" fill="none" /></svg>
        </SysBtn>
        <SysBtn>
          <svg width="12" height="12"><path d="M1 1l10 10M11 1L1 11" stroke="#eee" /></svg>
        </SysBtn>
      </TitleBar>

      <MenuBar>
        {menuItems.map((m) => (
          <span key={m}>{m}</span>
        ))}
      </MenuBar>

      <MainToolbar>
        <ToolStrip tools={mainTools} />
        <ToolGroupEnd />
      </MainToolbar>

      <UserBar>
        {userButtons.map(([t, w]) => (
          <UserBtn key={t} $w={w}>
            {t}
          </UserBtn>
        ))}
      </UserBar>

      <Desktop>
        <DaWindow>
          <DaTitle>
            <Glyph name="daDoc" s={16} />
            <DaTitleText>DA Converter Tests</DaTitleText>
            <DaCap>
              <svg width="12" height="12"><path d="M1 6h10" stroke="#888" /></svg>
            </DaCap>
            <DaCap>
              <svg width="12" height="12"><rect x="1.5" y="1.5" width="9" height="9" fill="none" stroke="#e0e0e0" /></svg>
            </DaCap>
            <DaCap>
              <svg width="12" height="12"><path d="M1 1l10 10M11 1L1 11" stroke="#666" /></svg>
            </DaCap>
          </DaTitle>
          <Console>
            <ConsoleHead>Ready...</ConsoleHead>
            <ConsoleBody>
              Noise and Interference test loaded
              <br />
              Set D/A Line-up 0dBFS -&gt; 14,7dBu
            </ConsoleBody>
          </Console>
          <DaForm>
            <DaLabel>DAC input mode</DaLabel>
            <RadioRow>
              <Radio $on />
              AES3 or S/PDIF
              <Radio $ml={10} />
              Soundcard
            </RadioRow>
            <DaLabel>Digital Data:</DaLabel>
            <DaCombo>
              48 kHz
              <ComboArrow />
            </DaCombo>
            <DaCombo>
              24 bit
              <ComboArrow />
            </DaCombo>
            <DaLabel>Select Audio Test:</DaLabel>
            <DaComboWide>
              Noise and Interference
              <ComboArrow />
            </DaComboWide>
            <DaBtn>Results Page</DaBtn>
            <DaBtn>Settings Page</DaBtn>
            <DaBtn>Help/Info Page</DaBtn>
            <RunBtn $green>Run Test</RunBtn>
            <DaBtn>Create Report</DaBtn>
          </DaForm>
        </DaWindow>

        <SweepWindow>
          <AeroTitle>
            <Glyph name="delta" s={17} />
            <AeroTitleText>Sweep Setup</AeroTitleText>
            <CapRow>
              <CapBtn>
                <MinGlyph />
              </CapBtn>
              <CapBtn>
                <MaxGlyph />
              </CapBtn>
              <CapBtn $red>
                <svg width="12" height="10"><path d="M2 1l8 8M10 1L2 9" stroke="#fff" strokeWidth="2.4" /></svg>
              </CapBtn>
            </CapRow>
          </AeroTitle>
          <SweepClient>
            <Group>
              <GroupTitle>Operation</GroupTitle>
              <OpButtons>
                <OpBtn>Go</OpBtn>
                <OpBtn $off>Stop</OpBtn>
                <OpBtn $off>Pause</OpBtn>
                <OpBtn>Single-step</OpBtn>
              </OpButtons>
              <CheckRow>
                <Box />
                <CheckLabel $w={137}>Append to existing Sweeps</CheckLabel>
                <Box>{checkMark}</Box>
                <CheckLabel $w={100}>Optimize for speed</CheckLabel>
                <Box />
                <CheckLabel>Alarm on Finish</CheckLabel>
              </CheckRow>
            </Group>
            <ResultsGroup>
              <GroupTitle>Results</GroupTitle>
              <ResultGrid>
                {results.map((r) => (
                  <React.Fragment key={r.n}>
                    <ResultLabel>{r.n}</ResultLabel>
                    <Sunken $pl={2}>
                      {r.v}
                      <ComboArrow />
                    </Sunken>
                    <SettingsBtn $off={r.off}>Settings &gt;&gt;</SettingsBtn>
                  </React.Fragment>
                ))}
                <AutoRow>
                  <Box />
                  <CheckLabel $w={89}>Auto-zoom Y axis</CheckLabel>
                  <Sunken $w={122} $off>
                    at end of Sweep
                    <ComboArrow $off />
                  </Sunken>
                </AutoRow>
              </ResultGrid>
            </ResultsGroup>
            <TabRow>
              <Tab $w={48}>Source</Tab>
              <Tab $w={105}>Outer Source - None</Tab>
              <Tab $w={96}>X axis - as Source</Tab>
            </TabRow>
            <TabPanel>
              <PanelRow $h={24}>
                <PanelLabel>Source</PanelLabel>
                <Sunken $w={318}>
                  Generator amplitude (both channels)
                  <ComboArrow />
                </Sunken>
              </PanelRow>
              <PanelRow $h={23}>
                <PanelLabel>Start</PanelLabel>
                <Sunken $w={73}>-144.000</Sunken>
                <PanelLabel $w={59} $pl={26}>Stop</PanelLabel>
                <Sunken $w={70}>0.000</Sunken>
                <PanelLabel $w={38} />
                <Sunken $w={78} $pl={3}>
                  dBFS
                  <ComboArrow />
                </Sunken>
              </PanelRow>
              <PanelRow $h={24}>
                <PanelLabel $w={181}>Interval</PanelLabel>
                <Sunken $w={70}>1.800</Sunken>
                <PanelLabel $w={87} $pl={36}>No. steps</PanelLabel>
                <Sunken $w={29}>80</Sunken>
              </PanelRow>
              <PanelRow $h={25}>
                <PanelCheck $h={18}>
                  <Box />
                  <CheckLabel $w={54}>Run script</CheckLabel>
                </PanelCheck>
                <Sunken $w={157} $off />
                <SmallBtn $w={16} $off $ml={2}>&gt;&gt;</SmallBtn>
                <Sunken $w={117} $off $pl={3} $ml={4}>
                  At start of step
                  <ComboArrow $off />
                </Sunken>
              </PanelRow>
              <PanelRow $h={19}>
                <PanelCheck $h={19}>
                  <Box />
                  <CheckLabel $w={114}>Regulate at each step</CheckLabel>
                </PanelCheck>
                <SmallBtn $w={75}>Regulation &gt;&gt;</SmallBtn>
                <SmallBtn $w={83} $ml={78}>Settling &gt;&gt;</SmallBtn>
              </PanelRow>
            </TabPanel>
          </SweepClient>
        </SweepWindow>

        <TraceWindow>
          <TraceTitle>
            <Glyph name="traceDoc" s={16} />
            <AeroTitleText $dim>Trace window</AeroTitleText>
            <CapRow>
              <CapBtn>
                <MinGlyph />
              </CapBtn>
              <CapBtn>
                <MaxGlyph />
              </CapBtn>
              <CapBtn>
                <CloseGlyph />
              </CapBtn>
            </CapRow>
          </TraceTitle>
          <TraceClient>
            <TraceToolbar>
              <ToolStrip tools={traceTools} />
            </TraceToolbar>
            <TracePlot />
            <Spacer />
            <ReadoutRow $w={527}>
              <AxisName $w={20}>X</AxisName>
              <BlackBox $w={68} $ml={0} />
              <UnitCombo $w={73} $off $pl={3} $ml={4}>
                dBFS
                <ComboArrow $off />
              </UnitCombo>
              <AxisName $w={20}>Y</AxisName>
              <BlackBox $w={68} $ml={0} />
              <UnitCombo $w={73} $off $pl={3} $ml={5}>
                dBFS
                <ComboArrow $off />
              </UnitCombo>
              <ToolSep $w={10} />
              <Box $flush />
              <CheckLabel $w={53} $off>Relative</CheckLabel>
              <ToolSep $w={12} />
              <ToolStrip tools="~xWave ~xPlus ~xGraph | ~xStack" />
            </ReadoutRow>
            <ReadoutRow $w={525}>
              <BlackBox $w={28} $ml={6} />
              <WhiteField />
              <ToolStrip tools="~xMinus | ~xRotL ~xRotL | ~xBig | ~xList ~sigmaX ~xChart" />
            </ReadoutRow>
          </TraceClient>
        </TraceWindow>

        <LegendWindow>
          <LegendHead>
            Legend
            <LegendClose>x</LegendClose>
          </LegendHead>
          <LegendList>
            {legend.map((l, i) => (
              <LegendRow key={i}>
                <LegendBox>{l.on && checkMark}</LegendBox>
                <Swatch viewBox="0 0 15 15">
                  <path d="M1 14l5-1 7-11" stroke={l.color} fill="none" strokeWidth="1.4" />
                </Swatch>
                <LegendName $active={l.active}>{l.name}</LegendName>
                {l.doc && <Glyph name="legendDoc" s={14} />}
              </LegendRow>
            ))}
          </LegendList>
        </LegendWindow>

        <MiniWindow>
          <Glyph name="delta" s={17} />
          <MiniText>Mo...</MiniText>
          <CapRow $gap={3}>
            <CapBtn>
              <svg width="12" height="10"><path d="M4.5.5h7v5h-7zM.5 3.5h7v6h-7z" fill="#dde" stroke="#445" /></svg>
            </CapBtn>
            <CapBtn>
              <MaxGlyph />
            </CapBtn>
            <CapBtn>
              <CloseGlyph />
            </CapBtn>
          </CapRow>
        </MiniWindow>
      </Desktop>

      <StatusBar>
        <HelpText>For Help, press F1</HelpText>
        <StatusRight>
          <StatusIcon $w={20}><Glyph name="gaugeSmall" s={16} /></StatusIcon>
          <StatusIcon $w={20}><Glyph name="meterSmall" s={16} /></StatusIcon>
          <ScardCell $w={36}>S/card<br />→</ScardCell>
          <StatusIcon $w={20}><Glyph name="arrowRight" s={13} /></StatusIcon>
          <StatusCell $w={54}>Bal/unbal</StatusCell>
          <StatusCell $w={49} $red $ml={3}>BNC</StatusCell>
          <StatusCell $w={32} $red $ml={4}>
            <TinyStack>48k<br />16</TinyStack>
          </StatusCell>
          <StatusCell $w={14} $red $ml={4}>
            <TinyStack $size={9}>CS</TinyStack>
          </StatusCell>
          <StatusCell $w={55} $ml={4} />
          <StatusCell $w={55} $ml={3} />
          <PageTab $w={46} $active $ml={5}>Page 1</PageTab>
          <PageTab $w={41}>Page 2</PageTab>
          <PageTab $w={43}>Page 3</PageTab>
          <PageTab $w={43}>Page 4</PageTab>
          <PageTab $w={44}>Page 5</PageTab>
        </StatusRight>
      </StatusBar>
    </Frame>
    <BottomStrip />
  </Screen>
);

export default App;
